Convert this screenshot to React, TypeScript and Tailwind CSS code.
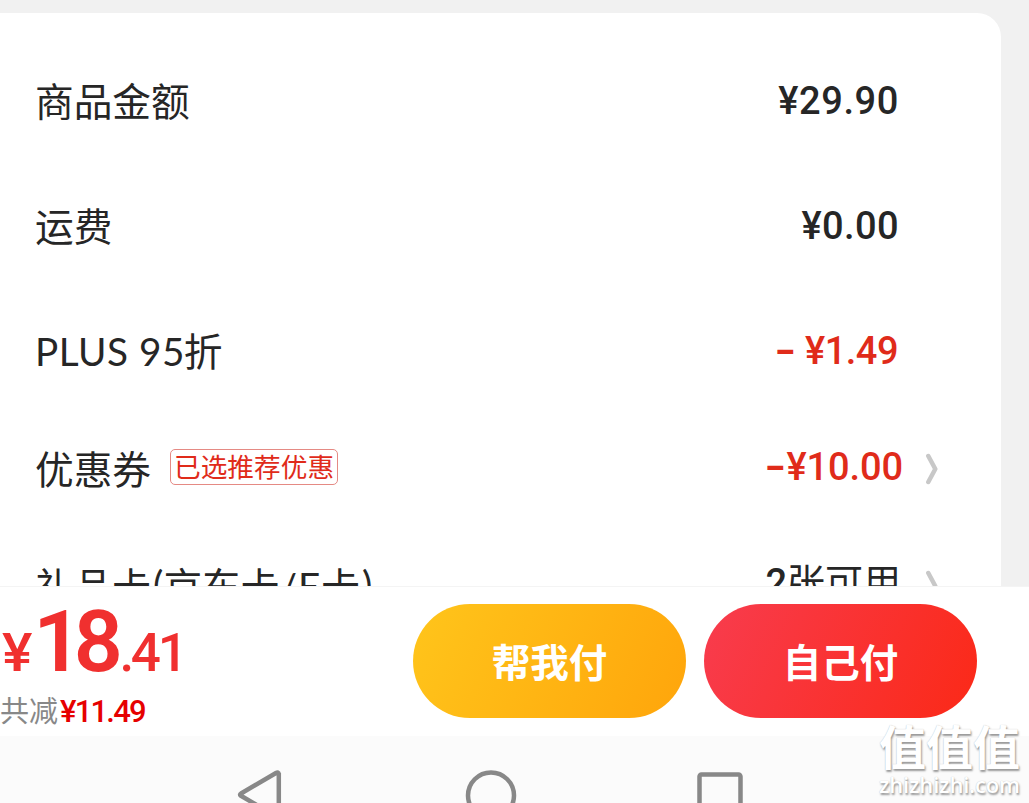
import type { ReactNode } from 'react';

const cjk = "font-['Noto_Sans_CJK_SC',sans-serif]";
const latin = "font-['Lato',sans-serif]";
const digits = "font-['Roboto','Noto_Sans_CJK_SC',sans-serif]";

function Chevron() {
  return (
    <svg className="mb-[3px] ml-[21px] h-[34px] w-[17px]" viewBox="0 0 17 34" fill="none">
      <path d="M4.3 5 L11.3 18 L4.3 31" stroke="#c8c8c8" strokeWidth="4.5" strokeLinejoin="round" strokeLinecap="round" />
    </svg>
  );
}

function Minus() {
  return <span className="mx-[3px] inline-block scale-x-150 font-bold">-</span>;
}

function Row({ label, className, children }: { label: ReactNode; className: string; children: ReactNode }) {
  return (
    <div className={`flex shrink-0 items-center justify-between pl-[35px] ${className}`}>
      <div className="mb-[5px] flex items-center whitespace-nowrap text-[38.7px] leading-none">{label}</div>
      <div className={`mb-px flex items-center whitespace-nowrap text-[38px] leading-none font-medium ${digits}`}>
        {children}
      </div>
    </div>
  );
}

export default function App() {
  return (
    <div className={`flex h-[803px] w-[1029px] flex-col overflow-hidden bg-[#f1f1f1] text-[#262626] ${cjk}`}>
      <div className="h-[586px] shrink-0 overflow-hidden pt-[13px] pr-7">
        <div className="flex h-[640px] flex-col rounded-tr-[24px] bg-white pt-[26px]">
          <Row label="商品金额" className="h-[125px] pr-[102px]">
            <span className="tracking-[0.6px]">¥29.90</span>
          </Row>
          <Row label="运费" className="h-[125px] pr-[102px]">
            <span className="tracking-[0.4px]">¥0.00</span>
          </Row>
          <Row
            label={
              <>
                <span className={`mt-[5px] tracking-[0.5px] ${latin}`}>PLUS 95</span>
                <span className="-ml-px">折</span>
              </>
            }
            className="h-[125px] pr-[103px]"
          >
            <span className="whitespace-pre text-[#e02b1a]">
              <Minus /> <span className="tracking-[-0.5px]">¥1.49</span>
            </span>
          </Row>
          <Row
            label={
              <>
                优惠券
                <span className="ml-[19px] flex h-[36px] w-[168px] items-center justify-center rounded-[5px] border border-[#e58a84] pb-[3px] text-[26.7px] leading-none text-[#e02b1a]">
                  已选推荐优惠
                </span>
              </>
            }
            className="h-[112px] pr-[60px]"
          >
            <span className="mb-[5px] text-[#e02b1a]">
              <Minus />
              <span className="tracking-[-0.1px]">¥10.00</span>
            </span>
            <Chevron />
          </Row>
          <Row
            label={
              <>
                礼品卡<span className={`ml-[2px] ${latin}`}>(</span>京东卡
                <span className={`mt-[5px] tracking-[1px] ${latin}`}>/E</span>卡
                <span className={`ml-[2px] ${latin}`}>)</span>
              </>
            }
            className="h-[112px] pt-[9px] pr-[60px]"
          >
            <span className="mr-[2px] mb-[6px]">
              2<span className="font-normal">张可用</span>
            </span>
            <Chevron />
          </Row>
        </div>
      </div>

      <div className="flex h-[150px] shrink-0 items-start border-t border-[#f4f4f4] bg-white">
        <div className="w-[413px] pt-[11px]">
          <div className={`flex h-[88px] items-baseline leading-[88px] text-[#f0302f] ${digits}`}>
            <span className="ml-[2px] inline-block origin-left scale-x-108 text-[53px] font-medium">¥</span>
            <span className="ml-[3px] text-[86px] font-semibold tracking-[-8.5px]">18</span>
            <span className="ml-[5px] text-[53px] font-medium tracking-[-3.3px]">.41</span>
          </div>
          <div className="flex items-baseline pt-[3px] text-[29px] leading-[40px] text-[#888]">
            共减
            <span className={`ml-[2px] text-[31px] font-medium tracking-[-1.8px] text-[#e60000] ${digits}`}>
              ¥11.49
            </span>
          </div>
        </div>
        <button className="mt-[17px] h-[114px] w-[273px] rounded-full bg-linear-[115deg,#ffc51b,#ffa50b] text-[38.5px] font-bold text-white">
          帮我付
        </button>
        <button className="mt-[17px] ml-[18px] h-[114px] w-[273px] rounded-full bg-linear-[115deg,#f83c4e,#fb2917] text-[38.5px] font-bold text-white">
          自己付
        </button>
      </div>

      <div className="relative h-[67px] shrink-0 bg-[#fbfbfb]">
        <svg className="block h-[67px] w-[1029px]" viewBox="0 0 1029 67" fill="none" stroke="#888" strokeWidth="4.5">
          <path d="M278.8 37 V82 L240.5 59.5 Q239.5 58.5 241 57.5 L276 37 Q278.5 35.5 278.8 38" strokeLinejoin="round" />
          <circle cx="491" cy="59.5" r="23" />
          <rect x="699.5" y="38.5" width="41" height="41" rx="2" />
        </svg>
        <div className="absolute top-[-18px] left-[879px] w-[145px] whitespace-nowrap text-white [text-shadow:1px_2px_2px_#999,0_0_1px_#bbb]">
          <div className="text-[47px] leading-[54px] font-bold">值值值</div>
          <div className="font-['Open_Sans',sans-serif] text-[22px] leading-[24px] font-semibold tracking-[-0.2px]">
            zhizhizhi.com
          </div>
        </div>
      </div>
    </div>
  );
}
